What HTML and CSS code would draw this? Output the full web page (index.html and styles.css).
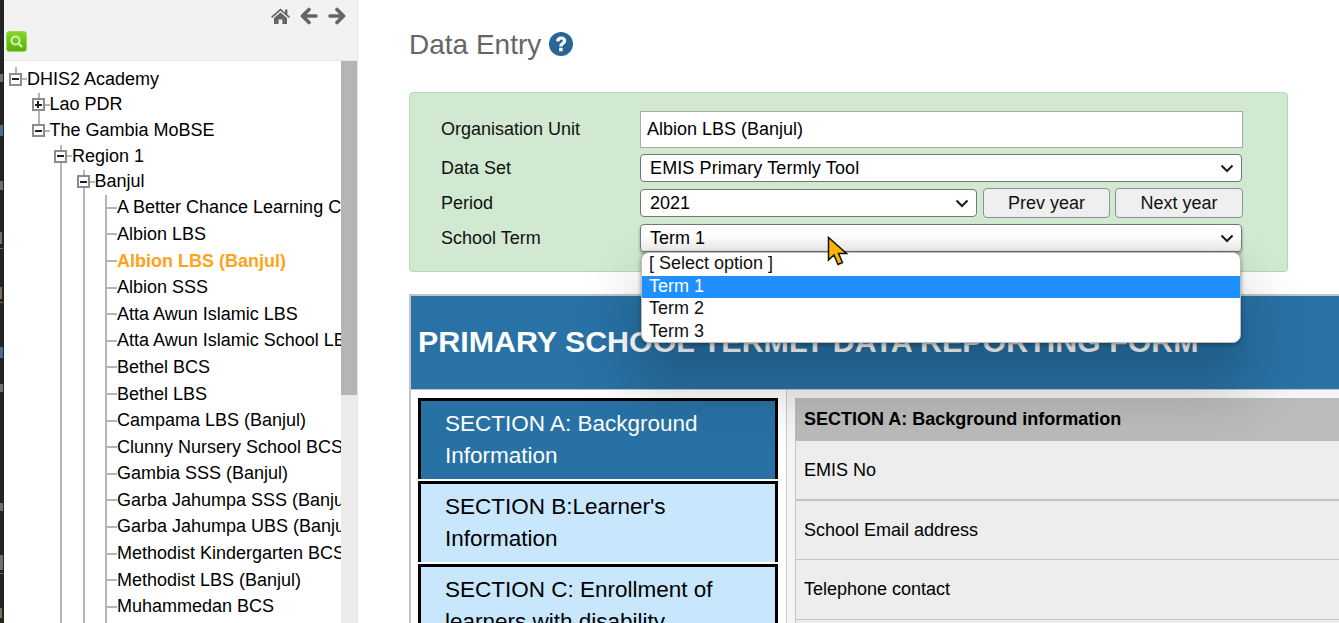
FILE: index.html
```html
<!DOCTYPE html>
<html lang="en">
<head>
<meta charset="utf-8">
<title>Data Entry</title>
<link rel="stylesheet" href="styles.css">
</head>
<body>
<div class="page">
  <div class="strip">
    <svg class="strip-marks" width="4" height="623" viewBox="0 0 4 623">
      <rect x="0" y="74" width="3" height="8" class="mark"/>
      <rect x="0" y="125" width="3" height="11" class="mark-blue"/>
      <rect x="0" y="181" width="3" height="9" class="mark"/>
      <rect x="0" y="232" width="2" height="12" class="mark-warm"/>
      <rect x="0" y="248" width="3" height="1" class="mark"/>
      <rect x="0" y="287" width="2" height="12" class="mark-warm"/>
      <rect x="0" y="302" width="3" height="1" class="mark"/>
      <rect x="0" y="347" width="3" height="11" class="mark-blue"/>
      <rect x="0" y="384" width="3" height="8" class="mark"/>
      <rect x="0" y="503" width="3" height="8" class="mark"/>
      <rect x="0" y="555" width="3" height="15" class="mark"/>
      <rect x="0" y="573" width="3" height="1" class="mark"/>
      <rect x="0" y="608" width="2" height="10" class="mark-warm"/>
    </svg>
  </div>
  <aside class="sidebar">
    <div class="tools">
      <div class="nav-icons">
        <svg class="nav-icon" width="19" height="16" viewBox="0 0 19 16"><path d="M9.500 0.500 L14 4.400V1.600h2.400V6.500L19 8.800 17.900 10 9.500 2.800 1.100 10 0 8.800Z"/><path d="M9.500 4.400 16 10v6h-4.600v-4.400H7.600V16H3v-6Z"/></svg>
        <svg class="nav-arrow" width="18" height="18" viewBox="0 0 18 18"><path d="M9 2.500 2.500 9 9 15.500M3.500 9H16"/></svg>
        <svg class="nav-arrow" width="18" height="18" viewBox="0 0 18 18"><path d="M9 2.500 15.500 9 9 15.500M14.500 9H2"/></svg>
      </div>
      <div class="search-btn">
        <svg width="15" height="15" viewBox="0 0 15 15"><circle cx="6.500" cy="6.500" r="4" class="lens"/><path d="M9.500 9.500 13 13" class="lens-handle"/></svg>
      </div>
    </div>
    <div class="tree-wrap">
      <div class="tree">
        <span class="vline v-root"></span>
        <span class="vline v-lao-top"></span>
        <span class="vline v-lao-down"></span>
        <span class="vline v-region"></span>
        <span class="vline v-region-down"></span>
        <span class="vline v-banjul"></span>
        <span class="vline v-banjul-down"></span>
        <span class="vline v-leaves"></span>
        <div class="row root"><span class="box minus"></span><span class="dash"></span><span class="name">DHIS2 Academy</span></div>
        <div class="row lvl1"><span class="box plus"></span><span class="dash"></span><span class="name">Lao PDR</span></div>
        <div class="row lvl1"><span class="box minus"></span><span class="dash"></span><span class="name">The Gambia MoBSE</span></div>
        <div class="row lvl2"><span class="box minus"></span><span class="dash"></span><span class="name">Region 1</span></div>
        <div class="row lvl3"><span class="box minus"></span><span class="dash"></span><span class="name">Banjul</span></div>
        <div class="leaves">
          <div class="leaf"><span class="tick"></span><span class="name">A Better Chance Learning Centre</span></div>
          <div class="leaf"><span class="tick"></span><span class="name">Albion LBS</span></div>
          <div class="leaf"><span class="tick"></span><span class="name selected">Albion LBS (Banjul)</span></div>
          <div class="leaf"><span class="tick"></span><span class="name">Albion SSS</span></div>
          <div class="leaf"><span class="tick"></span><span class="name">Atta Awun Islamic LBS</span></div>
          <div class="leaf"><span class="tick"></span><span class="name">Atta Awun Islamic School LBS</span></div>
          <div class="leaf"><span class="tick"></span><span class="name">Bethel BCS</span></div>
          <div class="leaf"><span class="tick"></span><span class="name">Bethel LBS</span></div>
          <div class="leaf"><span class="tick"></span><span class="name">Campama LBS (Banjul)</span></div>
          <div class="leaf"><span class="tick"></span><span class="name">Clunny Nursery School BCS</span></div>
          <div class="leaf"><span class="tick"></span><span class="name">Gambia SSS (Banjul)</span></div>
          <div class="leaf"><span class="tick"></span><span class="name">Garba Jahumpa SSS (Banjul)</span></div>
          <div class="leaf"><span class="tick"></span><span class="name">Garba Jahumpa UBS (Banjul)</span></div>
          <div class="leaf"><span class="tick"></span><span class="name">Methodist Kindergarten BCS</span></div>
          <div class="leaf"><span class="tick"></span><span class="name">Methodist LBS (Banjul)</span></div>
          <div class="leaf"><span class="tick"></span><span class="name">Muhammedan BCS</span></div>
        </div>
      </div>
      <div class="scrollbar"><div class="thumb"></div></div>
    </div>
  </aside>
  <main class="main">
    <h1 class="title">Data Entry
      <svg class="help" width="24" height="24" viewBox="0 0 24 24"><circle cx="12" cy="12" r="12" class="help-bg"/><path d="M7 9.200C7.200 6.200 9.400 4.500 12.200 4.500c2.900 0 5 1.800 5 4.300 0 1.800-1 2.800-2.300 3.700-1 .7-1.300 1.100-1.300 2h-3.300c0-1.800.6-2.800 1.900-3.700 1-.7 1.500-1.100 1.500-1.800 0-.8-.6-1.400-1.500-1.400-1 0-1.600.7-1.700 1.900ZM10.200 15.800h3.400v3.400h-3.400Z" class="help-q"/></svg>
    </h1>
    <section class="panel">
      <div class="form-row row-unit">
        <label class="lbl">Organisation Unit</label>
        <div class="input">Albion LBS (Banjul)</div>
      </div>
      <div class="form-row row-set">
        <label class="lbl">Data Set</label>
        <div class="sel sel-set"><span>EMIS Primary Termly Tool</span><svg class="chev" width="14" height="9" viewBox="0 0 14 9"><path d="M1.500 1.500 7 7l5.500-5.500"/></svg></div>
      </div>
      <div class="form-row row-period">
        <label class="lbl">Period</label>
        <div class="sel sel-period"><span>2021</span><svg class="chev" width="14" height="9" viewBox="0 0 14 9"><path d="M1.500 1.500 7 7l5.500-5.500"/></svg></div>
        <button class="btn">Prev year</button>
        <button class="btn">Next year</button>
      </div>
      <div class="form-row row-term">
        <label class="lbl">School Term</label>
        <div class="term-wrap">
          <div class="sel sel-term"><span>Term 1</span><svg class="chev" width="14" height="9" viewBox="0 0 14 9"><path d="M1.500 1.500 7 7l5.500-5.500"/></svg></div>
          <ul class="dropdown">
            <li class="opt">[ Select option ]</li>
            <li class="opt active">Term 1</li>
            <li class="opt">Term 2</li>
            <li class="opt">Term 3</li>
          </ul>
          <svg class="cursor" width="22" height="30" viewBox="0 0 22 30"><path d="M1.500 1.500V24l5.500-5 4 9.500 4.500-2-4-9H19.500Z"/></svg>
        </div>
      </div>
    </section>
    <section class="form">
      <header class="form-head">PRIMARY SCHOOL TERMLY DATA REPORTING FORM</header>
      <div class="form-body">
        <nav class="sections">
          <div class="section current">SECTION A: Background Information</div>
          <div class="section">SECTION B:Learner's Information</div>
          <div class="section">SECTION C: Enrollment of learners with disability</div>
        </nav>
        <div class="details">
          <div class="detail-head">SECTION A: Background information</div>
          <div class="detail-row">EMIS No</div>
          <div class="detail-row">School Email address</div>
          <div class="detail-row">Telephone contact</div>
          <div class="detail-row"></div>
        </div>
      </div>
    </section>
  </main>
</div>
</body>
</html>
```
FILE: styles.css
```css
* { box-sizing: border-box; }
html, body { margin: 0; height: 100%; overflow: hidden; background: #fff; }
body { font-family: "Liberation Sans", Arial, sans-serif; color: #000; }
.page { display: flex; height: 623px; width: 1339px; overflow: hidden; }
.strip { width: 4px; flex: none; background: #232323; }
.strip-marks { display: block; }
.mark { fill: #6e6e6e; }
.mark-blue { fill: #4a6c8f; }
.mark-warm { fill: #7d6c58; }

.sidebar { width: 354px; flex: none; display: flex; flex-direction: column; border-right: 1px solid #e4e4e4; }
.tools { height: 61px; flex: none; background: #f2f2f2; border-bottom: 1px solid #e6e6e6; padding: 5px 11px 0 2px; }
.nav-icons { display: flex; justify-content: flex-end; gap: 10px; height: 22px; align-items: center; }
.nav-icon { fill: #666; display: block; }
.nav-arrow { fill: none; stroke: #666; stroke-width: 3.600; stroke-linejoin: round; stroke-linecap: round; display: block; }
.search-btn { width: 21px; height: 21px; margin-top: 4px; border-radius: 3px; background: linear-gradient(#86d524, #55b00e); border: 1px solid #9ad85a; display: flex; align-items: center; justify-content: center; }
.lens { fill: none; stroke: #d5f3b4; stroke-width: 2; }
.lens-handle { stroke: #d5f3b4; stroke-width: 2.400; }

.tree-wrap { flex: 1; display: flex; min-height: 0; }
.tree { flex: 1; min-width: 0; overflow: hidden; background: #fff; font-size: 18px; color: #000; padding-top: 5.600px; position: relative; }
.scrollbar { width: 16px; flex: none; background: #ebebeb; }
.thumb { height: 334px; background: #b5b5b5; }

.vline { position: absolute; width: 2px; background: #b5b5b5; }
.v-root { left: 11px; top: 6px; height: 6px; }
.v-lao-top { left: 34px; top: 32px; height: 6px; }
.v-lao-down { left: 34px; top: 50px; height: 13px; }
.v-region { left: 56px; top: 84px; height: 6px; }
.v-region-down { left: 56px; top: 100px; bottom: 0; }
.v-banjul { left: 79px; top: 109px; height: 6px; }
.v-banjul-down { left: 79px; top: 125px; bottom: 0; }
.v-leaves { left: 101px; top: 134px; bottom: 0; }

.row { display: flex; align-items: center; height: 25.600px; white-space: nowrap; position: relative; }
.root { padding-left: 5px; }
.lvl1 { padding-left: 27.500px; }
.lvl2 { padding-left: 50px; }
.lvl3 { padding-left: 72.500px; }
.box { width: 13px; height: 13px; flex: none; border: 2px solid #8c8c8c; background: #fff; position: relative; }
.box::before { content: ""; position: absolute; left: 1px; right: 1px; top: 3.500px; height: 2px; background: #222; }
.plus::after { content: ""; position: absolute; top: 1px; bottom: 1px; left: 3.500px; width: 2px; background: #222; }
.dash { width: 5px; height: 2px; background: #b5b5b5; flex: none; }
.selected { color: #ffa31a; font-weight: 700; }
.leaves { white-space: nowrap; position: relative; }
.leaf { display: flex; align-items: center; height: 26.600px; padding-left: 101px; }
.tick { width: 12px; height: 2px; background: #b5b5b5; flex: none; }

.main { flex: 1; min-width: 0; padding: 0 0 0 51px; overflow: hidden; }
.title { margin: 0; height: 92px; padding-top: 28px; font-size: 28px; line-height: 34px; font-weight: 400; color: #666; display: flex; align-items: flex-start; gap: 8px; }
.help { flex: none; margin-top: 4px; }
.help-bg { fill: #276696; }
.help-q { fill: #fff; }

.panel { width: 879px; height: 180px; background: #d0e9d0; border: 1px solid #b5d9b5; border-radius: 4px; padding: 18px 44px 0 31px; font-size: 18px; }
.form-row { display: flex; align-items: center; }
.row-unit { height: 37px; margin-bottom: 6px; }
.row-set { height: 28px; margin-bottom: 6px; margin-right: 1px; }
.row-period { height: 30px; margin-bottom: 6px; gap: 5px; }
.row-term { height: 28px; margin-right: 1px; }
.lbl { width: 199px; flex: none; color: #111; }
.row-period .lbl { margin-right: -5px; }
.input { flex: 1; height: 37px; background: #fff; border: 1px solid #aaa; padding: 0 6px; line-height: 35px; }
.sel { height: 28px; background: #fff; border: 1px solid #767676; border-radius: 4px; padding: 0 7px 0 9px; display: flex; align-items: center; justify-content: space-between; }
.sel-set { flex: 1; letter-spacing: .12px; }
.sel-period { width: 337px; flex: none; margin-right: 1px; }
.term-wrap { flex: 1; position: relative; }
.sel-term { background: linear-gradient(#fff 40%, #ececec); box-shadow: 0 2px 3px rgba(0,0,0,.35); }
.chev { fill: none; stroke: #1a1a1a; stroke-width: 2; flex: none; display: block; }
.btn { width: 127px; height: 30px; flex: none; font: inherit; color: #111; background: #efefef; border: 1px solid #8f8f8f; border-radius: 4px; padding: 0; }
.btn:last-child { width: 128px; }

.dropdown { position: absolute; left: 1px; right: 1px; top: 28px; height: 91px; margin: 0; padding: 0; list-style: none; background: #fff; border: 1px solid #bdbdbd; border-radius: 8px; box-shadow: 0 1px 4px rgba(0,0,0,.4), 0 38px 60px 8px rgba(0,0,0,.2); overflow: hidden; z-index: 2; }
.opt { height: 22.700px; line-height: 20.500px; padding-left: 7px; color: #111; }
.active { background: #1e90ff; color: #fff; }
.cursor { position: absolute; left: 187px; top: 12px; z-index: 3; }
.cursor path { fill: #ffb400; stroke: #111; stroke-width: 1.500; }

.form { margin-top: 22px; width: 930px; border-left: 2px solid #c4c4c4; border-top: 2px solid #c4c4c4; }
.form-head { height: 94px; background: #2872a6; border-bottom: 1px solid #c4c4c4; color: #fff; font-size: 30.400px; font-weight: 700; line-height: 91px; padding-left: 7px; white-space: nowrap; }
.form-body { display: flex; background: #fff; }
.sections { width: 376px; flex: none; padding: 8px 8px 0 7px; border-right: 1px solid #c8c8c8; background: #fff; }
.section { height: 81px; margin-bottom: 2px; padding: 7px 20px 0 24px; border: 3px solid #000; border-bottom: 0; background: #c8e7fd; font-size: 22.500px; line-height: 32px; color: #000; overflow: hidden; }
.current { background: #2871a5; color: #fff; }
.details { flex: 1; padding: 8px 0 0 8px; font-size: 18px; background: #f5f5f5; }
.detail-head { height: 43px; background: #bbb; font-weight: 700; line-height: 42px; padding-left: 9px; }
.detail-row { height: 59.500px; background: #ededed; border-left: 1px solid #c4c4c4; border-bottom: 1px solid #c4c4c4; display: flex; align-items: center; padding: 1px 0 0 8px; }
.detail-head + .detail-row { border-bottom-width: 2px; }
```
